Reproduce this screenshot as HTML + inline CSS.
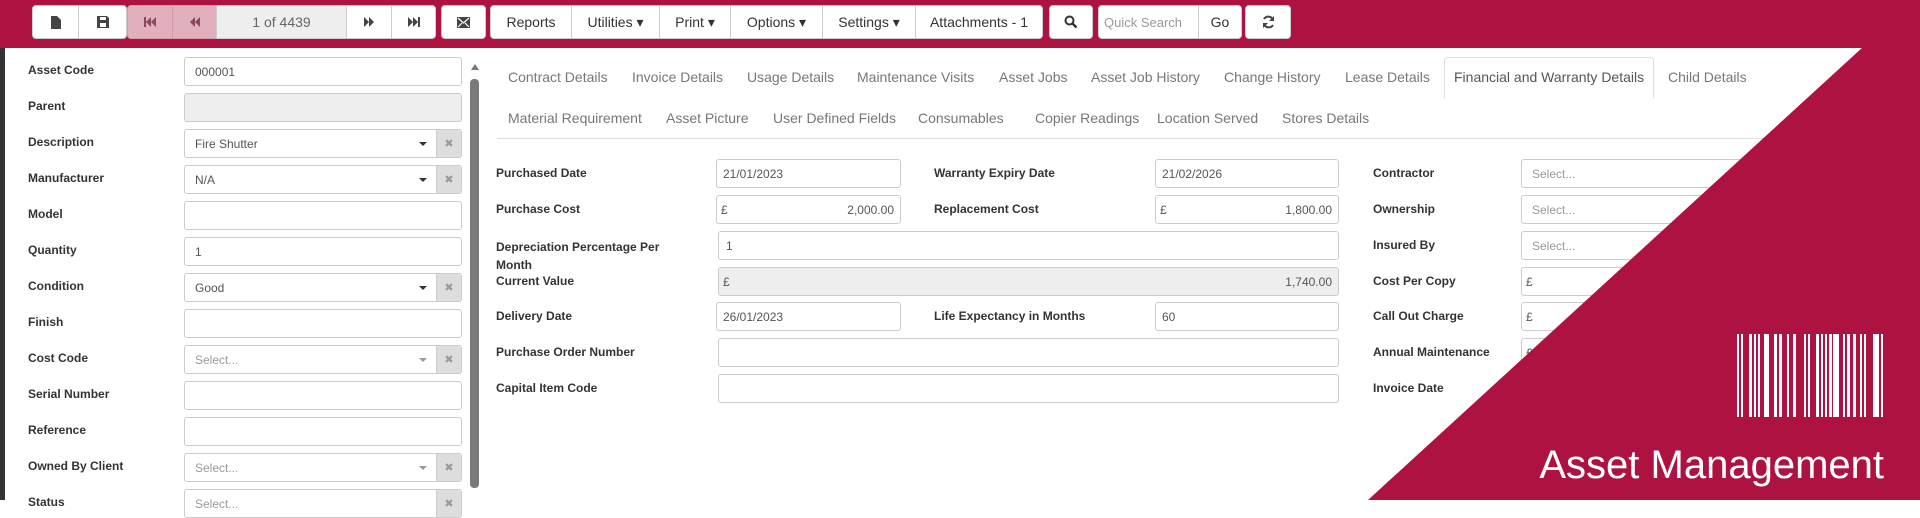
<!DOCTYPE html>
<html><head><meta charset="utf-8"><style>
*{box-sizing:border-box;margin:0;padding:0}
body{width:1920px;height:500px;overflow:hidden;background:#fff;font-family:"Liberation Sans",sans-serif;position:relative}
.a{position:absolute}
.top{left:0;top:0;width:1920px;height:48px;background:#ad1240}
.btn{position:absolute;top:5px;height:34px;background:#fff;border:1px solid #ccc;font-size:14px;color:#333;display:flex;align-items:center;justify-content:center;border-radius:0}
.lbl{position:absolute;font-size:12px;font-weight:bold;color:#333}
.inp{position:absolute;height:29px;border:1px solid #ccc;border-radius:3px;background:#fff;font-size:12px;color:#555;padding-left:10px;display:flex;align-items:center}
.ph{color:#999}
.sel .car{position:absolute;right:34px;top:12px;border-left:4px solid transparent;border-right:4px solid transparent;border-top:4px solid #333}
.sel .x{position:absolute;right:0;top:0;bottom:0;width:25px;background:#ddd;border-left:1px solid #ccc;color:#999;font-size:11px;display:flex;align-items:center;justify-content:center}
.tab{position:absolute;font-size:14px;color:#777}
.r{justify-content:space-between;padding-right:6px;padding-left:4px}
</style></head><body>
<div class="a" style="left:0;top:0;width:5px;height:500px;background:#333"></div>
<div class="a top"></div>
<!-- toolbar -->
<div class="btn" style="left:32px;width:47px;border-radius:4px 0 0 4px"><svg width="10" height="13"><path d="M0 0h6l4 4v9H0z" fill="#444"/></svg></div>
<div class="btn" style="left:78px;width:49px;border-radius:0 4px 4px 0"><svg width="12" height="12"><path d="M0 0h10l2 2v10H0z M3 1v3h6V1z M3 7v4h6V7z" fill="#444" fill-rule="evenodd"/></svg></div>
<div class="btn" style="left:127px;width:46px;background:#e2afbd;border-color:#d49aaa;border-radius:4px 0 0 4px"><svg width="12" height="12"><path d="M0 1h2v10H0zM7 1v10L2 6zM12 1v10L7 6z" fill="#8b4a5c"/></svg></div>
<div class="btn" style="left:172px;width:45px;background:#e2afbd;border-color:#d49aaa"><svg width="10" height="12"><path d="M5 1v10L0 6zM10 1v10L5 6z" fill="#8b4a5c"/></svg></div>
<div class="btn" style="left:216px;width:131px;background:#eee;color:#666">1 of 4439</div>
<div class="btn" style="left:346px;width:46px"><svg width="10" height="12"><path d="M0 1v10l5-5zM5 1v10l5-5z" fill="#444"/></svg></div>
<div class="btn" style="left:391px;width:45px;border-radius:0 4px 4px 0"><svg width="12" height="12"><path d="M0 1v10l5-5zM5 1v10l5-5zM10 1h2v10h-2z" fill="#444"/></svg></div>
<div class="btn" style="left:441px;width:45px;border-radius:4px"><svg width="13" height="11"><path d="M0 0h13v11H0z" fill="#444"/><path d="M1 1l5.5 5L12 1M1 10l4-4M12 10L8 6" stroke="#fff" stroke-width="1.2" fill="none"/></svg></div>
<div class="btn" style="left:490px;width:82px;border-radius:4px 0 0 4px">Reports</div>
<div class="btn" style="left:571px;width:89px">Utilities ▾</div>
<div class="btn" style="left:659px;width:72px">Print ▾</div>
<div class="btn" style="left:730px;width:93px">Options ▾</div>
<div class="btn" style="left:822px;width:94px">Settings ▾</div>
<div class="btn" style="left:915px;width:128px;border-radius:0 4px 4px 0">Attachments - 1</div>
<div class="btn" style="left:1049px;width:44px;border-radius:4px"><svg width="14" height="14"><circle cx="5.5" cy="5.5" r="4" stroke="#333" stroke-width="2" fill="none"/><path d="M8.5 8.5l4 4" stroke="#333" stroke-width="2.5"/></svg></div>
<div class="btn" style="left:1098px;width:101px;border-radius:4px 0 0 4px;justify-content:flex-start;padding-left:5px;color:#999;font-size:13px">Quick Search</div>
<div class="btn" style="left:1198px;width:44px;border-radius:0 4px 4px 0">Go</div>
<div class="btn" style="left:1245px;width:46px;border-radius:4px"><svg width="13" height="14"><path d="M11 5A5 5 0 0 0 2 4M2 9a5 5 0 0 0 9 1" stroke="#444" stroke-width="2" fill="none"/><path d="M12 1v5H7zM1 13V8h5z" fill="#444"/></svg></div>

<!-- left panel -->
<div class="lbl" style="left:28px;top:63px">Asset Code</div><div class="inp" style="left:184px;top:57px;width:278px">000001</div>
<div class="lbl" style="left:28px;top:99px">Parent</div><div class="inp" style="left:184px;top:93px;width:278px;background:#eee"></div>
<div class="lbl" style="left:28px;top:135px">Description</div><div class="inp sel" style="left:184px;top:129px;width:278px">Fire Shutter<span class="car"></span><span class="x">✖</span></div>
<div class="lbl" style="left:28px;top:171px">Manufacturer</div><div class="inp sel" style="left:184px;top:165px;width:278px">N/A<span class="car"></span><span class="x">✖</span></div>
<div class="lbl" style="left:28px;top:207px">Model</div><div class="inp" style="left:184px;top:201px;width:278px"></div>
<div class="lbl" style="left:28px;top:243px">Quantity</div><div class="inp" style="left:184px;top:237px;width:278px">1</div>
<div class="lbl" style="left:28px;top:279px">Condition</div><div class="inp sel" style="left:184px;top:273px;width:278px">Good<span class="car"></span><span class="x">✖</span></div>
<div class="lbl" style="left:28px;top:315px">Finish</div><div class="inp" style="left:184px;top:309px;width:278px"></div>
<div class="lbl" style="left:28px;top:351px">Cost Code</div><div class="inp sel ph" style="left:184px;top:345px;width:278px">Select...<span class="car" style="border-top-color:#999"></span><span class="x">✖</span></div>
<div class="lbl" style="left:28px;top:387px">Serial Number</div><div class="inp" style="left:184px;top:381px;width:278px"></div>
<div class="lbl" style="left:28px;top:423px">Reference</div><div class="inp" style="left:184px;top:417px;width:278px"></div>
<div class="lbl" style="left:28px;top:459px">Owned By Client</div><div class="inp sel ph" style="left:184px;top:453px;width:278px">Select...<span class="car" style="border-top-color:#999"></span><span class="x">✖</span></div>
<div class="lbl" style="left:28px;top:495px">Status</div><div class="inp sel ph" style="left:184px;top:489px;width:278px">Select...<span class="x">✖</span></div>
<div class="a" style="left:471px;top:64px;border-left:4px solid transparent;border-right:4px solid transparent;border-bottom:6px solid #777"></div>
<div class="a" style="left:470px;top:79px;width:9px;height:409px;background:#7a7a7a;border-radius:4px"></div>

<!-- tabs -->
<div class="a" style="left:1444px;top:57px;width:210px;border:1px solid #ddd;border-bottom:none;border-radius:4px 4px 0 0;height:41px"></div>
<div class="a" style="left:497px;top:138px;width:1423px;height:1px;background:#ddd"></div>
<div class="tab" style="left:508px;top:69px">Contract Details</div>
<div class="tab" style="left:632px;top:69px">Invoice Details</div>
<div class="tab" style="left:747px;top:69px">Usage Details</div>
<div class="tab" style="left:857px;top:69px">Maintenance Visits</div>
<div class="tab" style="left:999px;top:69px">Asset Jobs</div>
<div class="tab" style="left:1091px;top:69px">Asset Job History</div>
<div class="tab" style="left:1224px;top:69px">Change History</div>
<div class="tab" style="left:1345px;top:69px">Lease Details</div>
<div class="tab" style="left:1454px;top:69px;color:#555">Financial and Warranty Details</div>
<div class="tab" style="left:1668px;top:69px">Child Details</div>
<div class="tab" style="left:508px;top:110px">Material Requirement</div>
<div class="tab" style="left:666px;top:110px">Asset Picture</div>
<div class="tab" style="left:773px;top:110px">User Defined Fields</div>
<div class="tab" style="left:918px;top:110px">Consumables</div>
<div class="tab" style="left:1035px;top:110px">Copier Readings</div>
<div class="tab" style="left:1157px;top:110px">Location Served</div>
<div class="tab" style="left:1282px;top:110px">Stores Details</div>

<!-- financial form -->
<div class="lbl" style="left:496px;top:166px">Purchased Date</div><div class="inp" style="left:716px;top:159px;width:185px;padding-left:6px">21/01/2023</div>
<div class="lbl" style="left:934px;top:166px">Warranty Expiry Date</div><div class="inp" style="left:1155px;top:159px;width:184px;padding-left:6px">21/02/2026</div>
<div class="lbl" style="left:1373px;top:166px">Contractor</div><div class="inp ph" style="left:1521px;top:159px;width:250px;padding-left:10px">Select...</div>
<div class="lbl" style="left:496px;top:202px">Purchase Cost</div><div class="inp r" style="left:716px;top:195px;width:185px"><span>£</span><span>2,000.00</span></div>
<div class="lbl" style="left:934px;top:202px">Replacement Cost</div><div class="inp r" style="left:1155px;top:195px;width:184px"><span>£</span><span>1,800.00</span></div>
<div class="lbl" style="left:1373px;top:202px">Ownership</div><div class="inp ph" style="left:1521px;top:195px;width:250px">Select...</div>
<div class="lbl" style="left:496px;top:238px;line-height:18px">Depreciation Percentage Per<br>Month</div><div class="inp" style="left:718px;top:231px;width:621px;padding-left:7px">1</div>
<div class="lbl" style="left:1373px;top:238px">Insured By</div><div class="inp ph" style="left:1521px;top:231px;width:250px">Select...</div>
<div class="lbl" style="left:496px;top:274px">Current Value</div><div class="inp r" style="left:718px;top:267px;width:621px;background:#eee"><span>£</span><span>1,740.00</span></div>
<div class="lbl" style="left:1373px;top:274px">Cost Per Copy</div><div class="inp" style="left:1521px;top:267px;width:250px;padding-left:4px">£</div>
<div class="lbl" style="left:496px;top:309px">Delivery Date</div><div class="inp" style="left:716px;top:302px;width:185px;padding-left:6px">26/01/2023</div>
<div class="lbl" style="left:934px;top:309px">Life Expectancy in Months</div><div class="inp" style="left:1155px;top:302px;width:184px;padding-left:6px">60</div>
<div class="lbl" style="left:1373px;top:309px">Call Out Charge</div><div class="inp" style="left:1521px;top:302px;width:250px;padding-left:4px">£</div>
<div class="lbl" style="left:496px;top:345px">Purchase Order Number</div><div class="inp" style="left:718px;top:338px;width:621px"></div>
<div class="lbl" style="left:1373px;top:345px">Annual Maintenance</div><div class="inp" style="left:1521px;top:338px;width:250px;padding-left:4px">£</div>
<div class="lbl" style="left:496px;top:381px">Capital Item Code</div><div class="inp" style="left:718px;top:374px;width:621px"></div>
<div class="lbl" style="left:1373px;top:381px">Invoice Date</div>

<!-- overlay -->
<svg class="a" style="left:0;top:0" width="1920" height="500">
<polygon points="1863,47 1920,47 1920,500 1368,500" fill="#ad1240"/>
<g fill="#fff">
<rect x="1737" y="334" width="2" height="83"/><rect x="1741" y="334" width="2" height="83"/><rect x="1749" y="334" width="3" height="83"/><rect x="1754" y="334" width="2" height="83"/><rect x="1758" y="334" width="2" height="83"/><rect x="1764" y="334" width="5" height="83"/><rect x="1774" y="334" width="3" height="83"/><rect x="1779" y="334" width="3" height="83"/><rect x="1787" y="334" width="2" height="83"/><rect x="1793" y="334" width="3" height="83"/><rect x="1804" y="334" width="2" height="83"/><rect x="1808" y="334" width="2" height="83"/><rect x="1816" y="334" width="3" height="83"/><rect x="1821" y="334" width="2" height="83"/><rect x="1825" y="334" width="2" height="83"/><rect x="1829" y="334" width="3" height="83"/><rect x="1833" y="334" width="6" height="83"/><rect x="1843" y="334" width="2" height="83"/><rect x="1847" y="334" width="3" height="83"/><rect x="1853" y="334" width="3" height="83"/><rect x="1860" y="334" width="2" height="83"/><rect x="1864" y="334" width="2" height="83"/><rect x="1873" y="334" width="6" height="83"/><rect x="1881" y="334" width="2" height="83"/>
</g>
<text x="1884" y="478" text-anchor="end" fill="#fff" font-family="Liberation Sans, sans-serif" font-size="40">Asset Management</text>
</svg>
</body></html>
